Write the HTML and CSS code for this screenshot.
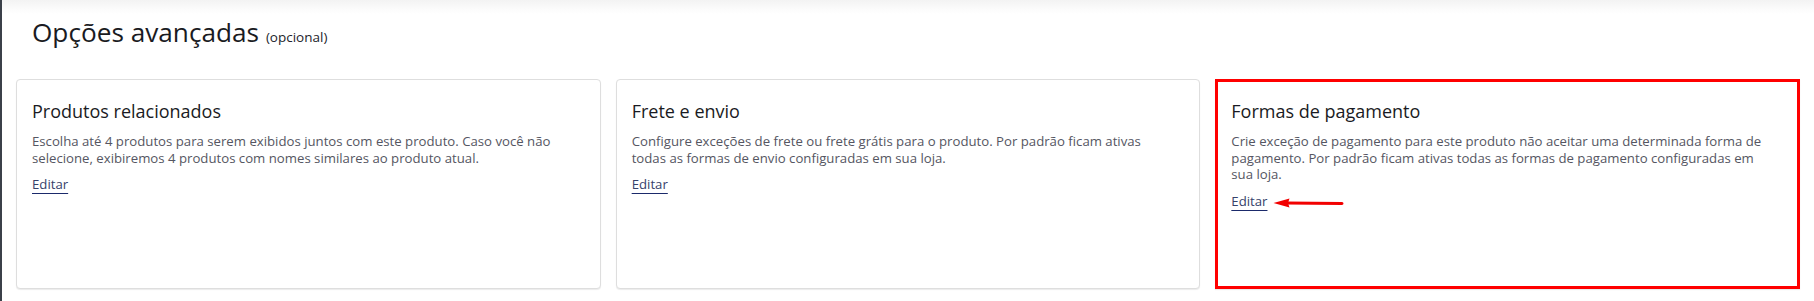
FILE: index.html
```html
<!DOCTYPE html>
<html lang="pt-BR">
<head>
<meta charset="utf-8">
<title>Opções avançadas</title>
<link rel="stylesheet" href="styles.css">
</head>
<body>
<div class="frame">
  <div class="topband"></div>
  <section class="advanced">
    <h1 class="title">Opções avançadas <small class="optional">(opcional)</small></h1>
    <div class="cards">
      <div class="card">
        <h2 class="card-title">Produtos relacionados</h2>
        <p class="card-text">Escolha até 4 produtos para serem exibidos juntos com este produto. Caso você não selecione, exibiremos 4 produtos com nomes similares ao produto atual.</p>
        <div class="card-actions"><a class="edit" href="#">Editar</a></div>
      </div>
      <div class="card">
        <h2 class="card-title">Frete e envio</h2>
        <p class="card-text">Configure exceções de frete ou frete grátis para o produto. Por padrão ficam ativas todas as formas de envio configuradas em sua loja.</p>
        <div class="card-actions"><a class="edit" href="#">Editar</a></div>
      </div>
      <div class="card card-highlight">
        <h2 class="card-title">Formas de pagamento</h2>
        <p class="card-text">Crie exceção de pagamento para este produto não aceitar uma determinada forma de pagamento. Por padrão ficam ativas todas as formas de pagamento configuradas em sua loja.</p>
        <div class="card-actions">
          <a class="edit" href="#">Editar</a>
          <svg class="arrow" width="72" height="12" viewBox="0 0 72 12" aria-hidden="true">
            <polygon points="0.5,6 16.5,1.6 15,6 16.5,10.6" fill="#f20000"/>
            <path d="M14 6.1 L40 6.2 L69 6.4" stroke="#f20000" stroke-width="3" stroke-linecap="round" fill="none"/>
          </svg>
        </div>
      </div>
    </div>
  </section>
</div>
</body>
</html>
```

FILE: styles.css
```css
* { box-sizing: border-box; }

html, body {
  margin: 0;
  padding: 0;
  background: #ffffff;
}

body {
  font-family: "Open Sans", "Noto Sans", "Liberation Sans", sans-serif;
  color: #1f2129;
}

.frame {
  min-height: 301px;
  border-left: 2px solid #3b4049;
}

.topband {
  height: 14px;
  background: linear-gradient(#f3f3f3, #fcfcfc 70%, #ffffff);
}

.advanced {
  padding: 0 14px 0 14px;
}

.title {
  margin: 0 0 0 16px;
  font-size: 26.2px;
  font-weight: 500;
  line-height: 36px;
  color: #1a1b22;
}

.optional {
  font-size: 13.5px;
  font-weight: 500;
  line-height: 1;
  color: #23242b;
}

.cards {
  margin-top: 29px;
  display: grid;
  grid-template-columns: repeat(3, 1fr);
  gap: 15px;
}

.card {
  height: 210px;
  border: 1px solid #dedede;
  border-radius: 4px;
  box-shadow: 0 1px 1px rgba(0, 0, 0, 0.08);
  padding: 19px 24px 16px 15px;
  background: #fff;
}

.card-highlight {
  outline: 3.5px solid #ff0000;
  outline-offset: -3px;
  border-radius: 0;
}

.card-title {
  margin: 0 0 10px 0;
  font-size: 18px;
  font-weight: 500;
  line-height: 24px;
  color: #1a1b23;
}

.card-text {
  margin: 0 0 10px 0;
  font-size: 13.2px;
  line-height: 16.7px;
  color: #555662;
}

.card-actions {
  display: flex;
  align-items: flex-start;
  gap: 6px;
}

.edit {
  font-size: 13.2px;
  line-height: 16.7px;
  color: #36426a;
  text-decoration: underline;
  text-decoration-color: #1b2a6b;
  text-decoration-thickness: 1px;
  text-underline-offset: 4px;
}

.arrow {
  display: block;
  margin-top: 4px;
}
```
